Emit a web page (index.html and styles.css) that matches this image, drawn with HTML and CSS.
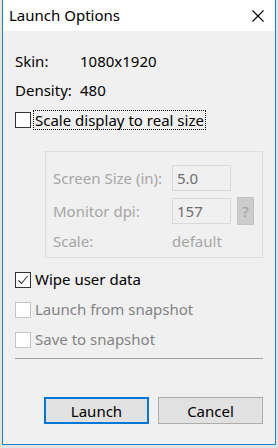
FILE: index.html
```html
<!DOCTYPE html>
<html lang="en">
<head>
    <meta charset="UTF-8">
    <meta name="viewport" content="width=device-width, initial-scale=1.0">
    <title>Launch Options</title>
    <link rel="stylesheet" href="styles.css">
</head>
<body>
    <div class="dialog">
        <header class="titlebar">
            <span class="title">Launch Options</span>
            <button class="close-btn" aria-label="Close">
                <svg width="12" height="12" viewBox="0 0 12 12">
                    <path d="M0.5 0.5 L11.5 11.5 M11.5 0.5 L0.5 11.5" stroke="#000" stroke-width="1.1" fill="none"/>
                </svg>
            </button>
        </header>

        <main class="content">
            <!-- Device info -->
            <div class="info">
                <span>Skin:</span><span>1080x1920</span>
                <span>Density:</span><span>480</span>
            </div>

            <label class="check">
                <span class="box"></span>
                <span class="check-label focused">Scale display to real size</span>
            </label>

            <!-- Scale settings (disabled) -->
            <div class="scale-group">
                <span class="field-label">Screen Size (in):</span>
                <span class="field-input">5.0</span>
                <span></span>

                <span class="field-label">Monitor dpi:</span>
                <span class="field-input">157</span>
                <span class="help-btn">?</span>

                <span class="field-label last">Scale:</span>
                <span class="field-label last">default</span>
                <span></span>
            </div>

            <div class="options">
                <label class="check">
                    <span class="box">
                        <svg width="14" height="14" viewBox="0 0 14 14">
                            <path d="M2.5 7.5 L5.5 10.5 L11.5 3" stroke="#333" stroke-width="1.1" fill="none"/>
                        </svg>
                    </span>
                    <span class="check-label">Wipe user data</span>
                </label>
                <label class="check disabled">
                    <span class="box"></span>
                    <span class="check-label">Launch from snapshot</span>
                </label>
                <label class="check disabled">
                    <span class="box"></span>
                    <span class="check-label">Save to snapshot</span>
                </label>
            </div>

            <hr class="separator">

            <div class="buttons">
                <button class="btn default">Launch</button>
                <button class="btn">Cancel</button>
            </div>
        </main>
    </div>
</body>
</html>
```

FILE: styles.css
```css
* {
    margin: 0;
    padding: 0;
    box-sizing: border-box;
}

body {
    font-family: 'Noto Sans', 'Segoe UI', sans-serif;
    font-size: 15px;
    color: #000;
    background-color: #e4e4e4;
    height: 100vh;
    overflow: hidden;
}

.dialog {
    width: 274px;
    height: 445px;
    margin-left: 2px;
    background-color: #f0f0f0;
    border: 1px solid #1883d7;
    border-top: none;
    display: flex;
    flex-direction: column;
}

.titlebar {
    height: 31px;
    flex-shrink: 0;
    background-color: #fff;
    display: flex;
    justify-content: space-between;
    align-items: center;
    padding-left: 6px;
}

.title {
    font-size: 15px;
    line-height: 31px;
}

.close-btn {
    width: 32px;
    height: 31px;
    margin-right: 1px;
    border: none;
    background: transparent;
    display: flex;
    justify-content: center;
    align-items: center;
    padding-top: 1px;
}

.content {
    padding: 20px 12px 0 12px;
    display: flex;
    flex-direction: column;
}

.info {
    display: grid;
    grid-template-columns: 65px 1fr;
    row-gap: 9px;
    line-height: 20px;
}

.check {
    display: flex;
    align-items: center;
    gap: 4px;
    height: 20px;
    line-height: 20px;
    flex-shrink: 0;
}

.info + .check {
    margin-top: 9px;
}

.box {
    width: 16px;
    height: 16px;
    flex-shrink: 0;
    border: 1px solid #333;
    background-color: #fff;
    display: flex;
    justify-content: center;
    align-items: center;
    margin-top: 2px;
}

.check-label {
    display: inline-block;
    line-height: 18px;
}

.focused {
    outline: 1px dotted #000;
    padding: 0 1px;
    margin-left: -1px;
    margin-top: 2px;
}

.check.disabled {
    color: #838383;
}

.check.disabled .box {
    border-color: #c4c4c4;
}

.scale-group {
    margin: 22px 0 0 30px;
    width: 218px;
    height: 107px;
    flex-shrink: 0;
    border: 1px solid #dcdcdc;
    padding: 13px 0 4px 7px;
    display: grid;
    grid-template-columns: 113px 59px 17px;
    column-gap: 6px;
    grid-template-rows: 26px 26px 20px;
    row-gap: 7px;
    align-items: center;
}

.scale-group .last {
    align-self: end;
}

.field-label {
    color: #a6a6a6;
    line-height: 20px;
    white-space: nowrap;
}

.field-input {
    height: 26px;
    border: 1px solid #d9d9d9;
    background-color: #f0f0f0;
    color: #6d6d6d;
    padding-left: 4px;
    line-height: 24px;
}

.help-btn {
    height: 28px;
    margin-top: -1px;
    background-color: #cccccc;
    border: 1px solid #c2c2c2;
    color: #a0a0a0;
    text-align: center;
    line-height: 26px;
}

.options {
    margin-top: 11px;
    display: flex;
    flex-direction: column;
    gap: 10px;
}

.separator {
    margin-top: 9px;
    border: none;
    border-top: 1px solid #a0a0a0;
    height: 1px;
    flex-shrink: 0;
}

.buttons {
    margin-top: 38px;
    display: flex;
    justify-content: flex-end;
    gap: 9px;
}

.btn {
    width: 105px;
    height: 27px;
    font-family: inherit;
    font-size: 15px;
    color: #000;
    background-color: #e1e1e1;
    border: 1px solid #adadad;
}

.btn.default {
    border: 2px solid #0078d7;
}
```
